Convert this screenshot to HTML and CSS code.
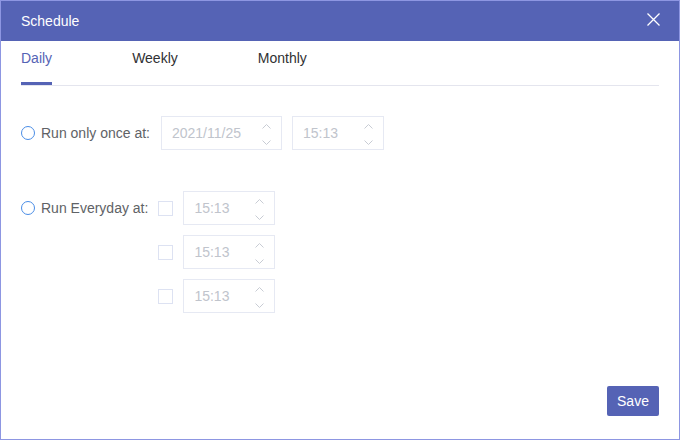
FILE: index.html
```html
<!DOCTYPE html>
<html>
<head>
<meta charset="utf-8">
<link rel="stylesheet" href="styles.css">
</head>
<body>
<div class="dialog">
  <div class="header">
    <span class="title">Schedule</span>
    <svg class="close" width="13" height="13" viewBox="0 0 13 13"><path d="M0.5 0.5 L12.5 12.5 M12.5 0.5 L0.5 12.5" stroke="#fff" stroke-width="1.3" fill="none"/></svg>
  </div>
  <div class="content">
    <div class="tabs">
      <div class="tab active">Daily</div>
      <div class="tab">Weekly</div>
      <div class="tab">Monthly</div>
    </div>
    <div class="row row-once">
      <span class="radio"></span>
      <span class="label">Run only once at:</span>
      <div class="box box-date">
        <span class="val">2021/11/25</span>
        <span class="spin">
          <svg width="9" height="5" viewBox="0 0 9 5"><polyline points="0.5,4.5 4.5,0.5 8.5,4.5" fill="none" stroke="#c8ccd4" stroke-width="1"/></svg>
          <svg width="9" height="5" viewBox="0 0 9 5"><polyline points="0.5,0.5 4.5,4.5 8.5,0.5" fill="none" stroke="#c8ccd4" stroke-width="1"/></svg>
        </span>
      </div>
      <div class="box box-time">
        <span class="val">15:13</span>
        <span class="spin">
          <svg width="9" height="5" viewBox="0 0 9 5"><polyline points="0.5,4.5 4.5,0.5 8.5,4.5" fill="none" stroke="#c8ccd4" stroke-width="1"/></svg>
          <svg width="9" height="5" viewBox="0 0 9 5"><polyline points="0.5,0.5 4.5,4.5 8.5,0.5" fill="none" stroke="#c8ccd4" stroke-width="1"/></svg>
        </span>
      </div>
    </div>
    <div class="row-every">
      <div class="every-head">
        <span class="radio"></span>
        <span class="label label-every">Run Everyday at:</span>
      </div>
      <div class="times">
        <div class="time-row">
          <span class="check"></span>
          <div class="box box-time">
            <span class="val">15:13</span>
            <span class="spin">
              <svg width="9" height="5" viewBox="0 0 9 5"><polyline points="0.5,4.5 4.5,0.5 8.5,4.5" fill="none" stroke="#c8ccd4" stroke-width="1"/></svg>
              <svg width="9" height="5" viewBox="0 0 9 5"><polyline points="0.5,0.5 4.5,4.5 8.5,0.5" fill="none" stroke="#c8ccd4" stroke-width="1"/></svg>
            </span>
          </div>
        </div>
        <div class="time-row">
          <span class="check"></span>
          <div class="box box-time">
            <span class="val">15:13</span>
            <span class="spin">
              <svg width="9" height="5" viewBox="0 0 9 5"><polyline points="0.5,4.5 4.5,0.5 8.5,4.5" fill="none" stroke="#c8ccd4" stroke-width="1"/></svg>
              <svg width="9" height="5" viewBox="0 0 9 5"><polyline points="0.5,0.5 4.5,4.5 8.5,0.5" fill="none" stroke="#c8ccd4" stroke-width="1"/></svg>
            </span>
          </div>
        </div>
        <div class="time-row">
          <span class="check"></span>
          <div class="box box-time">
            <span class="val">15:13</span>
            <span class="spin">
              <svg width="9" height="5" viewBox="0 0 9 5"><polyline points="0.5,4.5 4.5,0.5 8.5,4.5" fill="none" stroke="#c8ccd4" stroke-width="1"/></svg>
              <svg width="9" height="5" viewBox="0 0 9 5"><polyline points="0.5,0.5 4.5,4.5 8.5,0.5" fill="none" stroke="#c8ccd4" stroke-width="1"/></svg>
            </span>
          </div>
        </div>
      </div>
    </div>
    <div class="footer">
      <button class="save">Save</button>
    </div>
  </div>
</div>
</body>
</html>
```

FILE: styles.css
```css
html, body {
  margin: 0;
  padding: 0;
  background: #fff;
}
body {
  font-family: "Liberation Sans", Arial, sans-serif;
  font-size: 14px;
}
.dialog {
  width: 680px;
  height: 440px;
  box-sizing: border-box;
  border: 1px solid #8d96e2;
  display: flex;
  flex-direction: column;
  background: #fff;
}
.header {
  height: 40px;
  line-height: 40px;
  background: #5563b5;
  color: #fff;
  padding: 0 19px 0 20px;
  display: flex;
  justify-content: space-between;
  align-items: center;
}
.close {
  display: block;
  margin-top: -4px;
}
.content {
  flex: 1;
  padding: 0 20px 23px 20px;
  display: flex;
  flex-direction: column;
}
.tabs {
  display: flex;
  gap: 80px;
  border-bottom: 1px solid #e4e5ee;
}
.tab {
  height: 34px;
  line-height: 34px;
  padding-bottom: 10px;
  color: #303133;
  position: relative;
}
.tab.active {
  color: #5563b5;
}
.tab.active::after {
  content: "";
  position: absolute;
  left: 0;
  right: 0;
  bottom: 0;
  height: 3px;
  background: #5563b5;
}
.row {
  display: flex;
  align-items: center;
  margin-top: 30px;
  height: 34px;
}
.radio {
  width: 14px;
  height: 14px;
  box-sizing: border-box;
  border: 1.5px solid #4a8de6;
  border-radius: 50%;
  margin-right: 6px;
  flex: none;
}
.label {
  color: #606266;
  margin-right: 11px;
}
.label-every {
  margin-right: 10px;
}
.box {
  height: 34px;
  box-sizing: border-box;
  border: 1px solid #e6e9f3;
  display: flex;
  align-items: center;
  justify-content: space-between;
  padding: 0 10px 0 10px;
  color: #c0c4cc;
  flex: none;
}
.box-date {
  width: 121px;
  margin-right: 10px;
}
.box-time {
  width: 92px;
}
.spin {
  display: flex;
  flex-direction: column;
  gap: 11px;
  margin-top: 3px;
}
.spin svg {
  display: block;
}
.row-every {
  display: flex;
  margin-top: 41px;
}
.every-head {
  display: flex;
  align-items: center;
  height: 34px;
}
.times {
  display: flex;
  flex-direction: column;
  gap: 10px;
}
.time-row {
  display: flex;
  align-items: center;
}
.check {
  width: 15px;
  height: 15px;
  box-sizing: border-box;
  border: 1px solid #dde2f2;
  margin-right: 10px;
  flex: none;
}
.footer {
  margin-top: auto;
  display: flex;
  justify-content: flex-end;
}
.save {
  width: 52px;
  height: 30px;
  border: none;
  border-radius: 2px;
  background: #5563b5;
  color: #fff;
  font-family: "Liberation Sans", Arial, sans-serif;
  font-size: 14px;
  padding: 0;
}
```
